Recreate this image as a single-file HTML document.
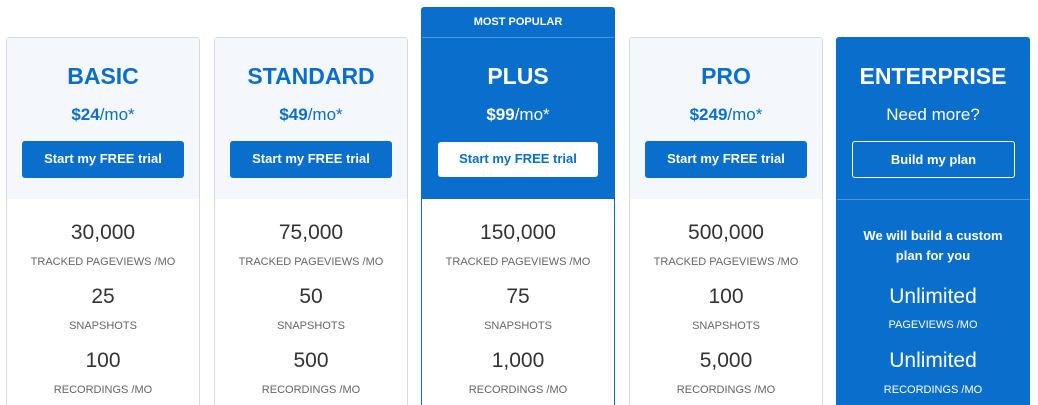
<!DOCTYPE html>
<html><head><style>
*{margin:0;padding:0;box-sizing:border-box}
html,body{width:1038px;height:405px;overflow:hidden}
body{background:#fff;font-family:"Liberation Sans",sans-serif;position:relative}
.c{position:absolute;top:37px;width:194px;height:368px;border:1px solid #d6dbe0;border-bottom:none;border-radius:3px 3px 0 0;background:#fff;text-align:center}
.h{position:absolute;left:0;right:0;top:0;height:161px;background:#f4f8fc}
.t{position:absolute;left:0;right:0;font-weight:bold}
.title{top:25px;font-size:23px;color:#0a6ecd}
.price{top:67px;font-size:17px;color:#0a6ecd;font-weight:normal}
.price b{font-weight:bold}
.btn{position:absolute;left:15px;width:162px;top:103px;height:37px;background:#0a6ecd;color:#fff;border-radius:3px;font-size:13px;font-weight:bold;line-height:35px}
.n{position:absolute;left:0;right:0;font-size:21px;color:#333}
.l{position:absolute;left:0;right:0;font-size:11px;color:#666}
.blue{background:#0a6ecd;border-color:#0a6ecd}
</style></head><body>

<div class="c" style="left:6px"><div class="h"></div>
<div class="t title">BASIC</div><div class="t price"><b>$24</b>/mo*</div><div class="btn">Start my FREE trial</div>
<div class="n" style="top:183px">30,000</div><div class="l" style="top:218px">TRACKED PAGEVIEWS /MO</div>
<div class="n" style="top:247px">25</div><div class="l" style="top:282px">SNAPSHOTS</div>
<div class="n" style="top:311px">100</div><div class="l" style="top:346px">RECORDINGS /MO</div></div>

<div class="c" style="left:214px"><div class="h"></div>
<div class="t title">STANDARD</div><div class="t price"><b>$49</b>/mo*</div><div class="btn">Start my FREE trial</div>
<div class="n" style="top:183px">75,000</div><div class="l" style="top:218px">TRACKED PAGEVIEWS /MO</div>
<div class="n" style="top:247px">50</div><div class="l" style="top:282px">SNAPSHOTS</div>
<div class="n" style="top:311px">500</div><div class="l" style="top:346px">RECORDINGS /MO</div></div>

<div class="c" style="left:421px;top:7px;height:398px;border-color:#0a6ecd">
<div class="h" style="height:191px;background:#0a6ecd"></div>
<div style="position:absolute;left:0;right:0;top:29px;border-top:1px solid #4a97e0"></div>
<div class="t" style="top:8px;font-size:11px;color:#fff">MOST POPULAR</div>
<div class="t title" style="top:55px;color:#fff">PLUS</div><div class="t price" style="top:97px;color:#fff"><b>$99</b>/mo*</div>
<div class="btn" style="top:134px;left:16px;width:160px;height:35px;line-height:33px;background:#fff;color:#0a6ecd;font-weight:bold">Start my FREE trial</div>
<div class="n" style="top:213px">150,000</div><div class="l" style="top:248px">TRACKED PAGEVIEWS /MO</div>
<div class="n" style="top:277px">75</div><div class="l" style="top:312px">SNAPSHOTS</div>
<div class="n" style="top:341px">1,000</div><div class="l" style="top:376px">RECORDINGS /MO</div></div>

<div class="c" style="left:629px"><div class="h"></div>
<div class="t title">PRO</div><div class="t price"><b>$249</b>/mo*</div><div class="btn">Start my FREE trial</div>
<div class="n" style="top:183px">500,000</div><div class="l" style="top:218px">TRACKED PAGEVIEWS /MO</div>
<div class="n" style="top:247px">100</div><div class="l" style="top:282px">SNAPSHOTS</div>
<div class="n" style="top:311px">5,000</div><div class="l" style="top:346px">RECORDINGS /MO</div></div>

<div class="c blue" style="left:836px">
<div style="position:absolute;left:0;right:0;top:161px;border-top:1px solid #4a97e0"></div>
<div class="t title" style="color:#fff">ENTERPRISE</div><div class="t price" style="color:#fff">Need more?</div>
<div class="btn" style="background:transparent;border:1px solid #fff;left:15px;width:163px">Build my plan</div>
<div class="t" style="top:188px;font-size:13px;color:#fff;line-height:20px">We will build a custom<br>plan for you</div>
<div class="n" style="top:247px;color:#fff">Unlimited</div><div class="l" style="top:281px;color:#fff">PAGEVIEWS /MO</div>
<div class="n" style="top:311px;color:#fff">Unlimited</div><div class="l" style="top:346px;color:#fff">RECORDINGS /MO</div></div>
</body></html>
